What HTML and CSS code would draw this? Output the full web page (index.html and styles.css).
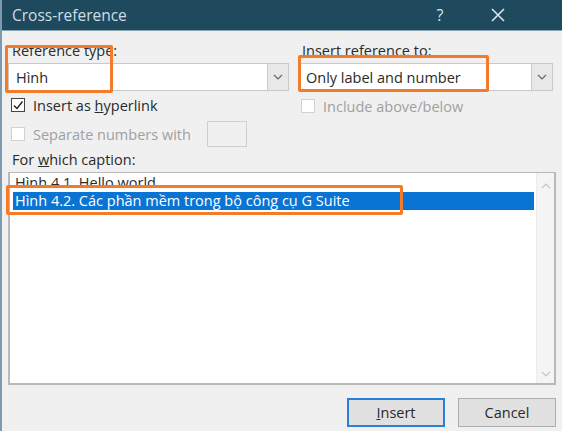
FILE: index.html
```html
<!DOCTYPE html>
<html lang="en">
<head>
    <meta charset="UTF-8">
    <meta name="viewport" content="width=device-width, initial-scale=1.0">
    <title>Cross-reference</title>
    <link rel="stylesheet" href="styles.css">
</head>
<body>
    <div class="dialog">
        <div class="titlebar">
            <span class="title">Cross-reference</span>
            <span class="title-btn help">?</span>
            <span class="title-btn close">
                <svg width="14" height="14" viewBox="0 0 14 14"><path d="M1 1 L13 13 M13 1 L1 13" stroke="#d6e4ec" stroke-width="1.6" fill="none"/></svg>
            </span>
        </div>

        <div class="content">
            <div class="columns">
                <div class="col col-left">
                    <label class="field-label">Reference type:</label>
                    <div class="combo">
                        <span class="combo-value">Hình</span>
                        <span class="combo-btn">
                            <svg width="10" height="6" viewBox="0 0 10 6"><path d="M1 1 L5 5 L9 1" stroke="#666" stroke-width="1.2" fill="none"/></svg>
                        </span>
                    </div>
                    <div class="check-row first">
                        <span class="checkbox checked">
                            <svg width="12" height="12" viewBox="0 0 12 12"><path d="M2 6.5 L5 9.5 L10.5 2.5" stroke="#222" stroke-width="1.4" fill="none"/></svg>
                        </span>
                        <span>Insert as <u>h</u>yperlink</span>
                    </div>
                    <div class="check-row disabled">
                        <span class="checkbox"></span>
                        <span>Separate numbers with</span>
                        <span class="small-input"></span>
                    </div>
                </div>
                <div class="col col-right">
                    <label class="field-label">Insert reference to:</label>
                    <div class="combo">
                        <span class="combo-value">Only label and number</span>
                        <span class="combo-btn">
                            <svg width="10" height="6" viewBox="0 0 10 6"><path d="M1 1 L5 5 L9 1" stroke="#666" stroke-width="1.2" fill="none"/></svg>
                        </span>
                    </div>
                    <div class="check-row first disabled">
                        <span class="checkbox"></span>
                        <span>Include above/below</span>
                    </div>
                </div>
            </div>

            <label class="field-label caption-label">For <u>w</u>hich caption:</label>
            <div class="listbox">
                <ul class="items">
                    <li>Hình 4.1. Hello world</li>
                    <li class="selected">Hình 4.2. Các phần mềm trong bộ công cụ G Suite</li>
                </ul>
                <div class="scrollbar">
                    <svg width="10" height="6" viewBox="0 0 10 6"><path d="M1 5 L5 1 L9 5" stroke="#c4c4c4" stroke-width="1.2" fill="none"/></svg>
                    <svg width="10" height="6" viewBox="0 0 10 6"><path d="M1 1 L5 5 L9 1" stroke="#c4c4c4" stroke-width="1.2" fill="none"/></svg>
                </div>
            </div>

            <div class="buttons">
                <button class="btn default"><u>I</u>nsert</button>
                <button class="btn">Cancel</button>
            </div>
        </div>

        <!-- highlight marks drawn over the dialog -->
        <div class="mark mark-type"></div>
        <div class="mark mark-insert"></div>
        <div class="mark mark-caption"></div>
    </div>
</body>
</html>
```

FILE: styles.css
```css
body {
    margin: 0;
    font-family: "Open Sans", "Noto Sans", sans-serif;
    font-size: 14.5px;
    color: #2a2a2a;
    background: #f0f0f0;
}

.dialog {
    position: relative;
    width: 562px;
    height: 431px;
    background: #f0f0f0;
    border-left: 2px solid #7d9ab0;
    box-sizing: border-box;
    overflow: hidden;
}

.titlebar {
    height: 30px;
    background: #1f4a5e;
    display: flex;
    align-items: center;
    padding-left: 10px;
    border-bottom: 1px solid #8aa3b3;
}

.title {
    flex: 1;
    color: #cddde6;
    font-size: 15.5px;
}

.title-btn {
    color: #d6e4ec;
    font-size: 16px;
    display: flex;
    align-items: center;
    justify-content: center;
}

.help {
    width: 20px;
    margin-right: 38px;
}

.close {
    width: 20px;
    margin-right: 54px;
}

.content {
    padding: 12px 6px 0 6px;
}

.columns {
    display: grid;
    grid-template-columns: 281px 255px;
    column-gap: 9px;
}

.col {
    display: flex;
    flex-direction: column;
}

.field-label {
    display: block;
    line-height: 16px;
    height: 16px;
    padding-left: 4px;
}

.combo {
    margin-top: 4px;
    height: 28px;
    box-sizing: border-box;
    background: #fff;
    border: 1px solid #c9c9c9;
    display: flex;
    align-items: center;
}

.combo-value {
    flex: 1;
    padding-left: 7px;
}

.combo-btn {
    width: 20px;
    height: 26px;
    background: #e8e8e8;
    border-left: 1px solid #c9c9c9;
    display: flex;
    align-items: center;
    justify-content: center;
}

.check-row {
    display: flex;
    align-items: center;
    gap: 8px;
    height: 26px;
    padding-left: 3px;
}

.check-row.first {
    margin-top: 2px;
    height: 24px;
}

.check-row.disabled {
    color: #a0a0a0;
    margin-top: 4px;
}

.check-row.first.disabled {
    margin-top: 3px;
}

.checkbox {
    width: 14px;
    height: 14px;
    box-sizing: border-box;
    border: 1px solid #d2d2d2;
    background: #fff;
    display: flex;
    align-items: center;
    justify-content: center;
}

.checkbox.checked {
    border-color: #444;
}

.small-input {
    width: 40px;
    height: 26px;
    box-sizing: border-box;
    border: 1px solid #cfcfcf;
    background: #f0f0f0;
    margin-left: 8px;
}

.caption-label {
    margin-top: 5px;
}

.listbox {
    margin-top: 4px;
    height: 213px;
    box-sizing: border-box;
    background: #fff;
    border: 2px solid #b9b9b9;
    border-top-width: 1px;
    display: flex;
}

.items {
    flex: 1;
    list-style: none;
    margin: 0;
    padding: 1px 2px 0 3px;
}

.items li {
    height: 18px;
    line-height: 18px;
    padding-left: 2px;
    white-space: nowrap;
}

.items li.selected {
    background: #0a74d4;
    color: #fff;
}

.scrollbar {
    width: 17px;
    background: #f4f4f4;
    border-left: 1px solid #ececec;
    display: flex;
    flex-direction: column;
    justify-content: space-between;
    align-items: center;
    padding: 10px 0 6px;
}

.buttons {
    display: flex;
    justify-content: flex-end;
    gap: 13px;
    margin-top: 13px;
    padding-right: 0;
}

.btn {
    width: 98px;
    height: 29px;
    font-family: inherit;
    font-size: 14.5px;
    color: #2a2a2a;
    background: #e1e1e1;
    border: 1px solid #adadad;
}

.btn.default {
    border: 2px solid #2b7fd6;
}

.mark {
    position: absolute;
    border: 3px solid #f47b2a;
    border-radius: 2px;
}

.mark-type {
    left: 3px;
    top: 45px;
    width: 102px;
    height: 42px;
}

.mark-insert {
    left: 296px;
    top: 55px;
    width: 185px;
    height: 31px;
}

.mark-caption {
    left: 4px;
    top: 185px;
    width: 391px;
    height: 24px;
}
```
